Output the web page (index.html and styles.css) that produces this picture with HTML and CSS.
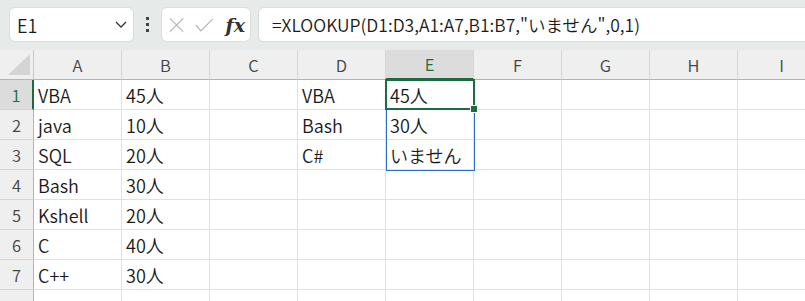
FILE: index.html
```html
<!DOCTYPE html>
<html lang="ja">
  <head>
    <meta charset="UTF-8" />
    <title>XLOOKUP</title>
    <link rel="stylesheet" href="styles.css">
  </head>
  <body>
    <div class="toolbar">
      <div class="namebox">
        <span>E1</span>
        <svg class="chevron" width="12" height="7" viewBox="0 0 12 7"><path d="M1 1l5 5 5-5" fill="none" stroke="#333" stroke-width="1.3"/></svg>
      </div>
      <div class="dots"><i></i><i></i><i></i></div>
      <div class="fxbox">
        <svg width="18" height="18" viewBox="0 0 18 18"><path d="M1 1l16 16M17 1L1 17" stroke="#b4b4b4" stroke-width="1.4" fill="none"/></svg>
        <svg width="22" height="16" viewBox="0 0 22 16"><path d="M1 8l6 7L21 1" stroke="#b4b4b4" stroke-width="1.4" fill="none"/></svg>
        <span class="fx">fx</span>
      </div>
      <div class="formula">=XLOOKUP(D1:D3,A1:A7,B1:B7,"いません",0,1)</div>
    </div>

    <div class="sheet">
      <div class="corner"><svg width="23" height="22" viewBox="0 0 23 22"><path d="M22 0V21H0z" fill="#d4d4d4"/></svg></div>
      <div class="col">A</div>
      <div class="col">B</div>
      <div class="col">C</div>
      <div class="col">D</div>
      <div class="col sel">E</div>
      <div class="col">F</div>
      <div class="col">G</div>
      <div class="col">H</div>
      <div class="col">I</div>

      <div class="row sel">1</div>
      <div class="cell">VBA</div><div class="cell">45人</div><div class="cell"></div><div class="cell">VBA</div>
      <div class="cell active">45人<span class="spill"></span><span class="frame"><span class="handle"></span></span></div>
      <div class="cell"></div><div class="cell"></div><div class="cell"></div><div class="cell"></div>

      <div class="row">2</div>
      <div class="cell">java</div><div class="cell">10人</div><div class="cell"></div><div class="cell">Bash</div><div class="cell">30人</div><div class="cell"></div><div class="cell"></div><div class="cell"></div><div class="cell"></div>

      <div class="row">3</div>
      <div class="cell">SQL</div><div class="cell">20人</div><div class="cell"></div><div class="cell">C#</div><div class="cell">いません</div><div class="cell"></div><div class="cell"></div><div class="cell"></div><div class="cell"></div>

      <div class="row">4</div>
      <div class="cell">Bash</div><div class="cell">30人</div><div class="cell"></div><div class="cell"></div><div class="cell"></div><div class="cell"></div><div class="cell"></div><div class="cell"></div><div class="cell"></div>

      <div class="row">5</div>
      <div class="cell">Kshell</div><div class="cell">20人</div><div class="cell"></div><div class="cell"></div><div class="cell"></div><div class="cell"></div><div class="cell"></div><div class="cell"></div><div class="cell"></div>

      <div class="row">6</div>
      <div class="cell">C</div><div class="cell">40人</div><div class="cell"></div><div class="cell"></div><div class="cell"></div><div class="cell"></div><div class="cell"></div><div class="cell"></div><div class="cell"></div>

      <div class="row">7</div>
      <div class="cell">C++</div><div class="cell">30人</div><div class="cell"></div><div class="cell"></div><div class="cell"></div><div class="cell"></div><div class="cell"></div><div class="cell"></div><div class="cell"></div>

      <div class="row"></div>
      <div class="cell"></div><div class="cell"></div><div class="cell"></div><div class="cell"></div><div class="cell"></div><div class="cell"></div><div class="cell"></div><div class="cell"></div><div class="cell"></div>
    </div>
  </body>
</html>
```

FILE: styles.css
```css
* {
  margin: 0;
  padding: 0;
  box-sizing: border-box;
}
body {
  width: 805px;
  height: 301px;
  overflow: hidden;
  background: #fff;
  font-family: "Noto Sans CJK JP", "Noto Sans", sans-serif;
  font-weight: 350;
  color: #1a1a1a;
}

/* formula bar */
.toolbar {
  display: flex;
  align-items: center;
  height: 50px;
  padding: 0 0 1px 9px;
  background: #e6ebea;
}
.namebox,
.fxbox,
.formula {
  height: 35px;
  background: #fff;
  border: 1px solid #d9dddc;
  border-radius: 6px;
  display: flex;
  align-items: center;
}
.namebox {
  width: 125px;
  padding: 0 6px 0 7px;
  justify-content: space-between;
  font-size: 18px;
}
.dots {
  width: 27px;
  display: flex;
  flex-direction: column;
  align-items: center;
  gap: 3px;
}
.dots i {
  width: 3px;
  height: 3px;
  background: #444;
}
.fxbox {
  width: 90px;
  padding: 0 5px 0 7px;
  gap: 11px;
}
.fx {
  font-family: "DejaVu Serif", serif;
  font-style: italic;
  font-weight: bold;
  font-size: 19px;
  color: #333;
  margin-left: 1px;
}
.formula {
  flex: 1;
  margin-left: 7px;
  margin-right: -10px;
  padding-left: 13px;
  font-size: 17.5px;
  white-space: nowrap;
}

/* grid */
.sheet {
  display: grid;
  grid-template-columns: 34px repeat(9, 88px);
  grid-template-rows: repeat(9, 30px);
  width: 805px;
  height: 251px;
  overflow: hidden;
}
.corner,
.col,
.row {
  background: #efefef;
  color: #444;
  font-size: 16.5px;
  display: flex;
  align-items: center;
  justify-content: center;
}
.corner {
  align-items: flex-end;
  justify-content: flex-end;
  padding: 0 2px 3px 0;
  border-right: 1px solid #c6c6c6;
  border-bottom: 1px solid #b4b4b4;
}
.col {
  border-right: 1px solid #d6d6d6;
  border-bottom: 1px solid #b4b4b4;
}
.row {
  border-right: 1px solid #b4b4b4;
  border-bottom: 1px solid #d6d6d6;
}
.col.sel {
  background: #dcdcdc;
  color: #1e6b41;
  border-bottom: 2px solid #1e6b41;
}
.row.sel {
  background: #dcdcdc;
  color: #1e6b41;
  border-right: 2px solid #1e6b41;
}
.cell {
  border-right: 1px solid #e0e0e0;
  border-bottom: 1px solid #e0e0e0;
  padding-left: 4px;
  font-size: 18px;
  line-height: 30px;
  white-space: nowrap;
}

/* selection over E1:E3 */
.active {
  position: relative;
}
.spill {
  position: absolute;
  left: 0;
  top: 0;
  width: 89px;
  height: 91px;
  border: 1px solid #2e6dd0;
}
.frame {
  position: absolute;
  left: -1px;
  top: -1px;
  right: -2px;
  bottom: -1px;
  border: 2px solid #1e6b41;
}
.handle {
  position: absolute;
  right: -5px;
  bottom: -5px;
  width: 8px;
  height: 8px;
  background: #1e6b41;
  border: 1px solid #fff;
}
```
